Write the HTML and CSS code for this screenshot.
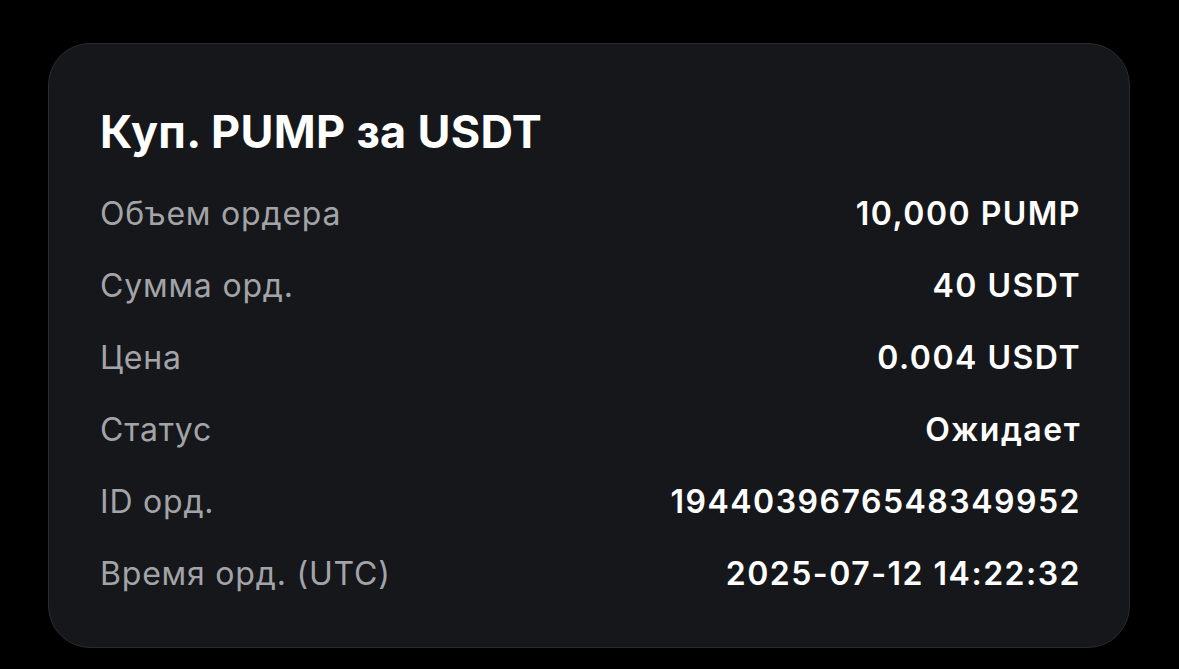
FILE: index.html
```html
<!DOCTYPE html>
<html lang="ru">
<head>
  <meta charset="utf-8" />
  <meta name="viewport" content="width=device-width, initial-scale=1" />
  <title>Ордер</title>
  <link rel="stylesheet" href="styles.css">
</head>
<body>
  <div class="card">
    <h1 class="title">Куп. PUMP за USDT</h1>
    <div class="rows">
      <div class="row"><span class="label">Объем ордера</span><span class="value">10,000 PUMP</span></div>
      <div class="row"><span class="label">Сумма орд.</span><span class="value">40 USDT</span></div>
      <div class="row"><span class="label">Цена</span><span class="value">0.004 USDT</span></div>
      <div class="row"><span class="label">Статус</span><span class="value">Ожидает</span></div>
      <div class="row"><span class="label">ID орд.</span><span class="value">1944039676548349952</span></div>
      <div class="row"><span class="label">Время орд. (UTC)</span><span class="value">2025-07-12 14:22:32</span></div>
    </div>
  </div>
</body>
</html>
```

FILE: styles.css
```css
body {
  margin: 0;
  background: #000;
  font-family: Inter, "Noto Sans", sans-serif;
  color: #fff;
  padding: 43px 0 0 48px;
}
.card {
  box-sizing: border-box;
  width: 1082px;
  height: 605px;
  background: #16171b;
  border: 1.5px solid #2a2b30;
  border-radius: 42px;
  padding: 63px 51px 0 51px;
}
.title {
  margin: 0 0 20px;
  font-size: 45px;
  line-height: 50px;
  font-weight: 700;
  letter-spacing: 0.3px;
}
.row {
  display: flex;
  justify-content: space-between;
  align-items: center;
  height: 72px;
  font-size: 32px;
}
.label {
  color: #a3a4a8;
  letter-spacing: 0.8px;
}
.value {
  font-weight: 600;
  letter-spacing: 1.5px;
  margin-right: -3px;
}
```
